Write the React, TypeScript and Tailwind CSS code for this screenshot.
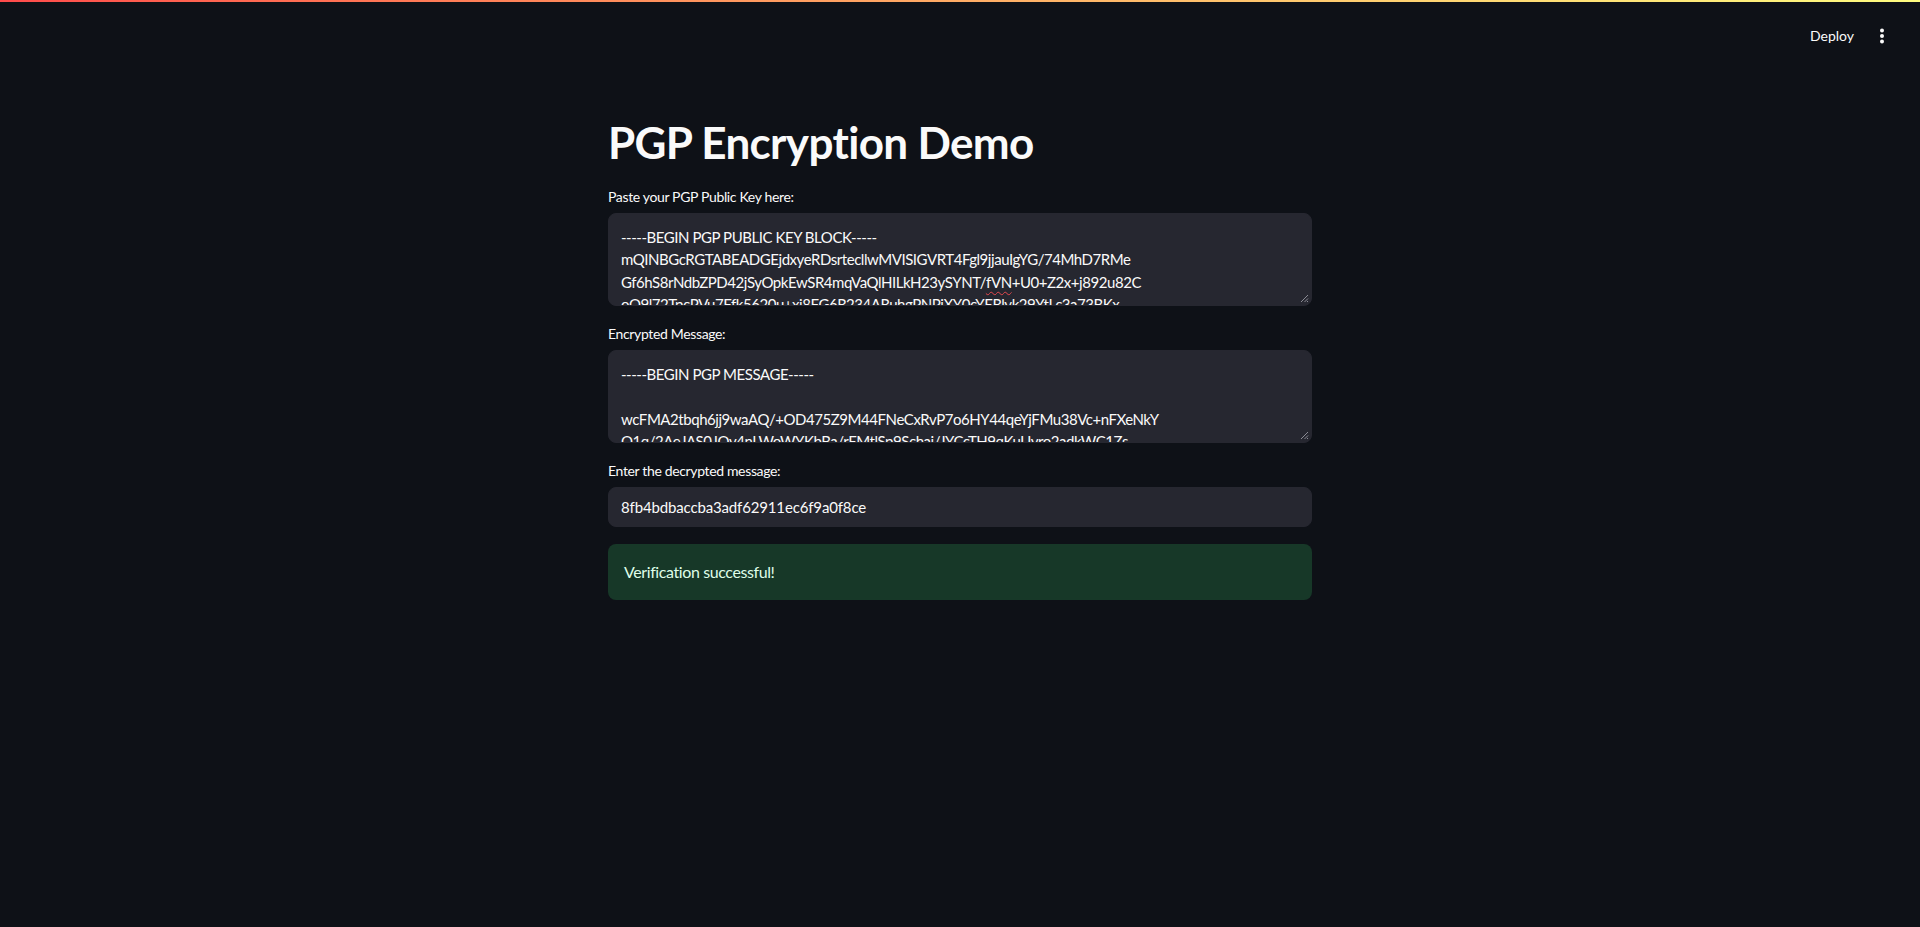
import { ReactNode } from "react";

const keyLines = [
    "-----BEGIN PGP PUBLIC KEY BLOCK-----",
    "mQINBGcRGTABEADGEjdxyeRDsrtecllwMVISIGVRT4Fgl9jjauIgYG/74MhD7RMe",
    null,
    "oO9l72TpcPVu7Ffk5620u+xj8FG6R234ARuhgPNPiXY0cYERlyk29YtLc3a73BKx",
];

const messageLines = [
    "-----BEGIN PGP MESSAGE-----",
    "",
    "wcFMA2tbqh6jj9waAQ/+OD475Z9M44FNeCxRvP7o6HY44qeYjFMu38Vc+nFXeNkY",
    "O1q/2AeJAS0JOv4nLWoWYKbBa/rEMtlSp9Schai/JYCcTH9qKuUyro2adkWC1Zs",
];

function ResizeGrip() {
    return (
        <svg className="absolute bottom-[2px] right-[2px]" width="9" height="9" viewBox="0 0 9 9">
            <path d="M8 1L1 8M8 4.5L4.5 8M8 7L7 8" stroke="#8a8b94" strokeWidth="1" />
        </svg>
    );
}

function Label({ children }: { children: ReactNode }) {
    return <div className="h-6 mb-1 flex items-center text-sm tracking-[-0.025em] text-[#fafafa]">{children}</div>;
}

function TextArea({ lines }: { lines: ReactNode[] }) {
    return (
        <div className="relative h-[93px] overflow-hidden rounded-lg border border-[#262730] bg-[#262730] px-3 pt-3 text-[15px] tracking-[-0.03em] leading-[22.4px] text-[#fafafa] whitespace-pre">
            {lines.map((line, i) => (
                <div key={i} className="h-[22.4px]">{line}</div>
            ))}
            <ResizeGrip />
        </div>
    );
}

export default function App() {
    const keyBody: ReactNode[] = keyLines.map((l) => l);
    keyBody[2] = (
        <>
            Gf6hS8rNdbZPD42jSyOpkEwSR4mqVaQlHILkH23ySYNT/
            <span className="underline decoration-wavy decoration-[#e5484d] decoration-1 underline-offset-[3px]">fVN</span>
            +U0+Z2x+j892u82C
        </>
    );

    return (
        <div className="min-h-screen w-full bg-[#0e1117] font-['Lato',sans-serif] text-[#fafafa]">

            {/* Header */}
            <header className="fixed top-0 left-0 right-0 h-[60px] bg-[#0e1117]">
                <div className="h-[2px] w-full bg-gradient-to-r from-[#ff4b4b] to-[#fffd80]" />
                <div className="flex items-center justify-end h-[68px] pr-[30px] gap-[12px]">
                    <button className="text-sm text-[#fafafa] px-2 py-1">Deploy</button>
                    <svg width="16" height="24" viewBox="0 0 16 24" fill="#fafafa">
                        <circle cx="8" cy="6.5" r="2" />
                        <circle cx="8" cy="12" r="2" />
                        <circle cx="8" cy="17.5" r="2" />
                    </svg>
                </div>
            </header>

            {/* Main */}
            <main className="mx-auto w-[736px] px-4 pt-24 pb-40">
                <h1 className="pt-5 pb-4 text-[44px] leading-[1.2] font-bold tracking-[-0.015em]">PGP Encryption Demo</h1>

                <div className="flex flex-col gap-4">
                    <div>
                        <Label>Paste your PGP Public Key here:</Label>
                        <TextArea lines={keyBody} />
                    </div>

                    <div>
                        <Label>Encrypted Message:</Label>
                        <TextArea lines={messageLines} />
                    </div>

                    <div>
                        <Label>Enter the decrypted message:</Label>
                        <div className="h-10 flex items-center rounded-lg border border-[#262730] bg-[#262730] px-3 text-[15px] tracking-[-0.01em] text-[#fafafa]">
                            8fb4bdbaccba3adf62911ec6f9a0f8ce
                        </div>
                    </div>

                    <div className="mt-px rounded-lg bg-[#173828] px-4 py-4 text-base leading-6 tracking-[-0.025em] text-[#dffde9]">
                        Verification successful!
                    </div>
                </div>
            </main>

        </div>
    );
}
